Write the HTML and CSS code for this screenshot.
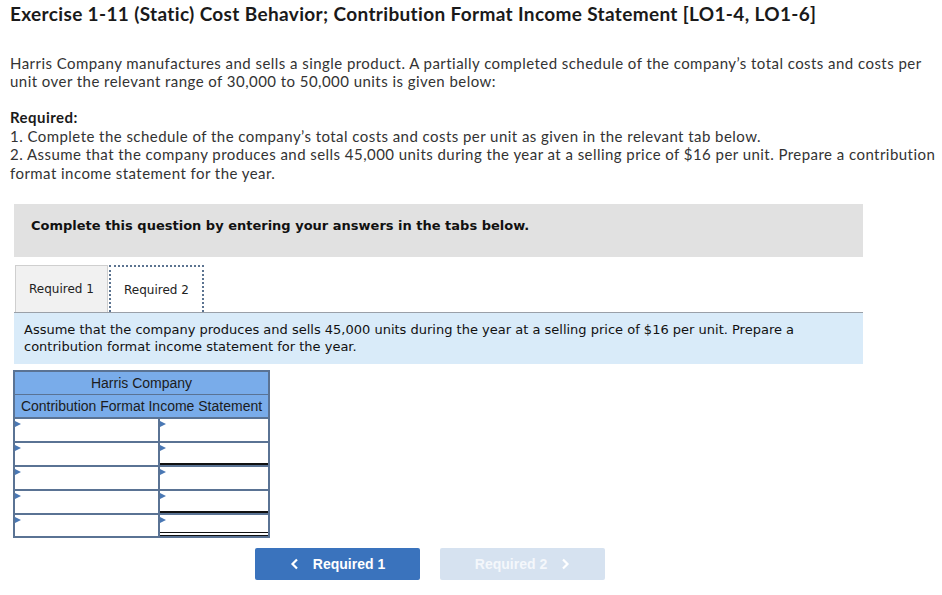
FILE: index.html
```html
<!DOCTYPE html>
<html>
<head>
<meta charset="utf-8">
<link rel="stylesheet" href="styles.css">
</head>
<body>
<div class="page">
  <h1 class="title">Exercise 1-11 (Static) Cost Behavior; Contribution Format Income Statement [LO1-4, LO1-6]</h1>
  <p class="intro">Harris Company manufactures and sells a single product. A partially completed schedule of the company’s total costs and costs per unit over the relevant range of 30,000 to 50,000 units is given below:</p>
  <div class="req">
    <div class="req-head">Required:</div>
    <div>1. Complete the schedule of the company’s total costs and costs per unit as given in the relevant tab below.</div>
    <div>2. Assume that the company produces and sells 45,000 units during the year at a selling price of $16 per unit. Prepare a contribution format income statement for the year.</div>
  </div>

  <div class="question">
    <div class="notice">Complete this question by entering your answers in the tabs below.</div>
    <div class="tabs">
      <div class="tab">Required 1</div>
      <div class="tab active">Required 2</div>
    </div>
    <div class="prompt">Assume that the company produces and sells 45,000 units during the year at a selling price of $16 per unit. Prepare a contribution format income statement for the year.</div>
  </div>

  <div class="sheet">
    <div class="sheet-head">Harris Company</div>
    <div class="sheet-head sub">Contribution Format Income Statement</div>
    <div class="sheet-row">
      <div class="cell label"></div>
      <div class="cell amount"></div>
    </div>
    <div class="sheet-row">
      <div class="cell label"></div>
      <div class="cell amount under"></div>
    </div>
    <div class="sheet-row">
      <div class="cell label"></div>
      <div class="cell amount"></div>
    </div>
    <div class="sheet-row">
      <div class="cell label"></div>
      <div class="cell amount under"></div>
    </div>
    <div class="sheet-row last">
      <div class="cell label"></div>
      <div class="cell amount double"></div>
    </div>
  </div>

  <div class="nav">
    <button class="nav-btn prev"><svg width="10" height="12" viewBox="0 0 10 12"><path d="M7 1.5 L2.5 6 L7 10.5" fill="none" stroke="#fff" stroke-width="2.2"/></svg><span>Required 1</span></button>
    <button class="nav-btn next"><span>Required 2</span><svg width="10" height="12" viewBox="0 0 10 12"><path d="M3 1.5 L7.5 6 L3 10.5" fill="none" stroke="#fff" stroke-width="2.2"/></svg></button>
  </div>
</div>
</body>
</html>
```
FILE: styles.css
```css
* { box-sizing: border-box; }
body {
  margin: 0;
  background: #fff;
  color: #333;
  font-family: "Lato", "Open Sans", sans-serif;
}
.page {
  padding: 2px 0 0 10px;
}
.title {
  margin: 0;
  font-size: 19px;
  line-height: 24px;
  font-weight: 700;
  letter-spacing: 0.35px;
  color: #1a1a1a;
}
.intro {
  margin: 28px 0 0 0;
  font-size: 15px;
  line-height: 18px;
  letter-spacing: 0.45px;
  width: 925px;
}
.req {
  margin-top: 18px;
  font-size: 15px;
  line-height: 18.5px;
  letter-spacing: 0.45px;
  width: 930px;
}
.req-head {
  font-weight: 700;
  color: #1a1a1a;
}
.question {
  margin: 22px 0 0 4px;
  width: 849px;
  font-family: "DejaVu Sans", Verdana, sans-serif;
  color: #111;
}
.notice {
  background: #e1e1e1;
  font-size: 13px;
  font-weight: 700;
  line-height: 16px;
  padding: 14px 17px 23px;
}
.tabs {
  display: flex;
  margin-top: 8px;
  padding-left: 1px;
}
.tab {
  width: 93px;
  height: 47px;
  display: flex;
  align-items: center;
  justify-content: center;
  font-size: 12px;
  background: #f1f1f1;
  border: 1px solid #cfcfcf;
  border-bottom: none;
  color: #222;
}
.tab.active {
  width: 95px;
  background: #fff;
  border: 2px dotted #5b7390;
  border-bottom: none;
  margin-left: 1px;
}
.prompt {
  background: #d9ebf9;
  border-top: 1px solid #9aa0a8;
  font-size: 13px;
  line-height: 17px;
  padding: 8px 40px 9px 10px;
  color: #111;
}
.sheet {
  margin: 6px 0 0 3px;
  width: 257px;
  border: 2px solid #5a7394;
  border-bottom: none;
  font-family: "Liberation Sans", Arial, sans-serif;
}
.sheet-head {
  background: #79acea;
  height: 23px;
  line-height: 22px;
  font-size: 14px;
  text-align: center;
  color: #1c1c1c;
  border-bottom: 1px solid #5a7394;
}
.sheet-head.sub {
  height: 24px;
  border-bottom: 2px solid #5a7394;
}
.sheet-row {
  display: flex;
  height: 24px;
  border-bottom: 2px solid #5a7394;
}
.sheet-row.last {
  height: 23px;
}
.cell {
  position: relative;
  background: #fff;
}
.cell::before {
  content: "";
  position: absolute;
  left: 0;
  top: 2px;
  border-left: 6px solid #4a78b4;
  border-top: 3.5px solid transparent;
  border-bottom: 3.5px solid transparent;
}
.label {
  width: 145px;
  border-right: 2px solid #5a7394;
}
.amount {
  flex: 1;
}
.amount.under {
  border-bottom: 2px solid #111;
}
.amount.double {
  border-bottom: 4px double #111;
}
.nav {
  display: flex;
  gap: 20px;
  margin: 10px 0 0 245px;
}
.nav-btn {
  width: 165px;
  height: 32px;
  border: none;
  border-radius: 2px;
  display: flex;
  align-items: center;
  justify-content: center;
  gap: 13px;
  font-family: "Liberation Sans", Arial, sans-serif;
  font-size: 14px;
  font-weight: 700;
  color: #fff;
  padding: 0;
}
.prev { background: #3a73bd; }
.next { background: #d6e2f0; color: #f4f7fb; }
```
